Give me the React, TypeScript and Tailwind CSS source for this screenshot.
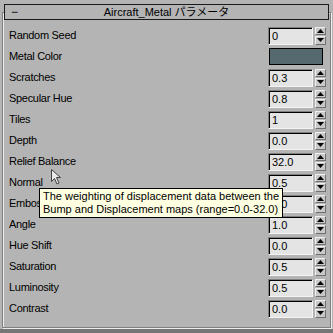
const rows: { label: string; value?: string; color?: string }[] = [
  { label: 'Random Seed', value: '0' },
  { label: 'Metal Color', color: '#56696f' },
  { label: 'Scratches', value: '0.3' },
  { label: 'Specular Hue', value: '0.8' },
  { label: 'Tiles', value: '1' },
  { label: 'Depth', value: '0.0' },
  { label: 'Relief Balance', value: '32.0' },
  { label: 'Normal', value: '0.5' },
  { label: 'Emboss', value: '1.0' },
  { label: 'Angle', value: '1.0' },
  { label: 'Hue Shift', value: '0.0' },
  { label: 'Saturation', value: '0.5' },
  { label: 'Luminosity', value: '0.5' },
  { label: 'Contrast', value: '0.0' },
];

function Spinner() {
  return (
    <div className="flex flex-col gap-[1px] w-[11px] h-[18px] ml-[2px]">
      <div className="flex-1 flex items-center justify-center bg-[#c8c8c8] border-t border-l border-t-[#f0f0f0] border-l-[#f0f0f0] border-b border-r border-b-[#707070] border-r-[#707070]">
        <svg width="7" height="4" viewBox="0 0 7 4">
          <polygon points="3.5,0 7,4 0,4" fill="#000" />
        </svg>
      </div>
      <div className="flex-1 flex items-center justify-center bg-[#c8c8c8] border-t border-l border-t-[#f0f0f0] border-l-[#f0f0f0] border-b border-r border-b-[#707070] border-r-[#707070]">
        <svg width="7" height="4" viewBox="0 0 7 4">
          <polygon points="0,0 7,0 3.5,4" fill="#000" />
        </svg>
      </div>
    </div>
  );
}

function Row({ label, value, color }: { label: string; value?: string; color?: string }) {
  return (
    <div className="flex items-center h-[21px] pl-[6px] pr-[4px]">
      <span className="flex-1 tracking-[-0.3px]">{label}</span>
      {color ? (
        <div className="w-[54px] h-[17px] mr-[3px] border border-black" style={{ backgroundColor: color }} />
      ) : (
        <div className="flex items-center">
          <div className="w-[45px] h-[18px] bg-[#e4e4e4] border border-t-[#808080] border-l-[#808080] border-b-[#f4f4f4] border-r-[#f4f4f4] shadow-[inset_1px_1px_0_#000] pl-[3px] leading-[16px]">
            {value}
          </div>
          <Spinner />
        </div>
      )}
    </div>
  );
}

export default function App() {
  return (
    <div
      className="relative w-[333px] h-[333px] overflow-hidden bg-[#b4b4b4] text-black text-[11px] flex flex-col"
      style={{ fontFamily: '"Liberation Sans", "Noto Sans CJK JP", sans-serif' }}
    >
      <div className="relative z-10 mt-[4px] mx-[4px] h-[16px] border border-[#1a1a1a] bg-[#b4b4b4] flex items-center">
        <span className="w-[20px] pl-[6px] leading-none text-[12px]">−</span>
        <span className="flex-1 text-center text-[11px] leading-none pr-[20px]">Aircraft_Metal パラメータ</span>
      </div>
      <div className="flex-1 -mt-[8px] mx-[2px] border border-[#808080] shadow-[inset_1px_1px_0_#ececec,1px_1px_0_#ececec] pt-[12px]">
        {rows.map((r) => (
          <Row key={r.label} {...r} />
        ))}
      </div>
      <div className="h-[4px] mt-[1px] bg-[#767676]" />

      <svg className="absolute left-[51px] top-[169px]" width="10" height="16" viewBox="0 0 10 16">
        <path d="M0.5 0.5 L0.5 12.5 L3.5 9.5 L6 15 L8 14 L5.5 8.5 L9.5 8.5 Z" fill="#e8e8e8" stroke="#404040" strokeWidth="1" />
      </svg>

      <div className="absolute left-[39px] top-[188px] w-[244px] h-[30px] bg-[#ffffe1] border border-black pl-[3px] pt-[1px] leading-[13px] whitespace-nowrap">
        <div>The weighting of displacement data between the</div>
        <div>Bump and Displacement maps (range=0.0-32.0)</div>
      </div>
    </div>
  );
}
